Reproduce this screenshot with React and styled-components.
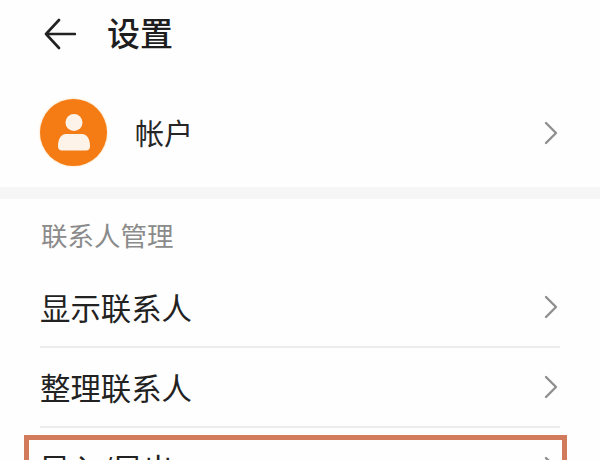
import React from "react";
import styled, { createGlobalStyle } from "styled-components";

const Global = createGlobalStyle`
  html, body { margin: 0; padding: 0; background: #fefefe; overflow: hidden; }
  body { width: 600px; height: 460px; font-family: "Noto Sans CJK SC", "Liberation Sans", sans-serif; }
`;

const Page = styled.div`
  width: 600px;
  height: 460px;
  overflow: hidden;
  display: flex;
  flex-direction: column;
  background: #fefefe;
`;

const Header = styled.header`
  height: 68px;
  flex: none;
  display: flex;
  align-items: center;
  gap: 31px;
  padding-left: 44px;
`;

const BackIcon = styled.svg`
  width: 32px;
  height: 32px;
  flex: none;
  fill: none;
  stroke: #222;
  stroke-width: 2.6;
  stroke-linecap: round;
  stroke-linejoin: round;
`;

const Title = styled.h1`
  margin: 0 0 4px;
  font-size: 33px;
  line-height: 40px;
  font-weight: 500;
  color: #1e1e1e;
`;

const AccountRow = styled.div`
  height: 119px;
  flex: none;
  display: flex;
  align-items: center;
  padding: 10px 42px 0 40px;
  box-sizing: border-box;
`;

const Avatar = styled.div`
  width: 67px;
  height: 67px;
  flex: none;
  border-radius: 50%;
  background: #f57c14;
  box-shadow: 0 0 2px #fbc98c;
  display: flex;
  align-items: center;
  justify-content: center;
`;

const AvatarFigure = styled.svg`
  width: 32px;
  height: 37px;
  fill: #fdf3e9;
`;

const AccountName = styled.span`
  flex: 1;
  margin: 0 0 2px 28px;
  font-size: 29px;
  line-height: 40px;
  color: #262626;
`;

const Band = styled.div`
  height: 12px;
  flex: none;
  background: #f6f6f6;
`;

const SectionLabel = styled.div`
  height: 69px;
  flex: none;
  box-sizing: border-box;
  padding: 17px 40px 0 41px;
  font-size: 26.5px;
  line-height: 38px;
  color: #8b8b8b;
`;

const List = styled.div`
  margin: 0 40px;
  flex: none;
`;

const Row = styled.div`
  position: relative;
  height: 80px;
  display: flex;
  align-items: center;
  justify-content: space-between;
  padding-right: 2px;
  border-bottom: ${(p) => (p.$last ? "none" : "2px solid #ececec")};
  box-sizing: border-box;
`;

const RowText = styled.span`
  font-size: 30.4px;
  line-height: 42px;
  color: #222;
  white-space: nowrap;
`;

const Chevron = styled.svg`
  width: 14px;
  height: 24px;
  flex: none;
  fill: none;
  stroke: #8f8f8f;
  stroke-width: 2.4;
  stroke-linecap: round;
  stroke-linejoin: round;
`;

const Highlight = styled.div`
  position: absolute;
  left: -16px;
  right: -7px;
  top: 7px;
  height: 90px;
  border: 5px solid #d27a5c;
  pointer-events: none;
`;

const Arrow = () => (
  <Chevron viewBox="0 0 14 24">
    <path d="M2 2 L12 12 L2 22" />
  </Chevron>
);

export default function App() {
  return (
    <Page>
      <Global />
      <Header>
        <BackIcon viewBox="0 0 32 32">
          <path d="M15 2 L2 16 L15 30 M2 16 H31" />
        </BackIcon>
        <Title>设置</Title>
      </Header>
      <AccountRow>
        <Avatar>
          <AvatarFigure viewBox="0 0 32 37">
            <circle cx="16" cy="8.5" r="8.5" />
            <path d="M8 20 H24 C29 20 32 25 32 32 C32 35 30.5 36.5 28 36.5 H4 C1.5 36.5 0 35 0 32 C0 25 3 20 8 20 Z" />
          </AvatarFigure>
        </Avatar>
        <AccountName>帐户</AccountName>
        <Arrow />
      </AccountRow>
      <Band />
      <SectionLabel>联系人管理</SectionLabel>
      <List>
        <Row>
          <RowText>显示联系人</RowText>
          <Arrow />
        </Row>
        <Row>
          <RowText>整理联系人</RowText>
          <Arrow />
        </Row>
        <Row $last>
          <RowText>导入/导出</RowText>
          <Arrow />
          <Highlight />
        </Row>
      </List>
    </Page>
  );
}
